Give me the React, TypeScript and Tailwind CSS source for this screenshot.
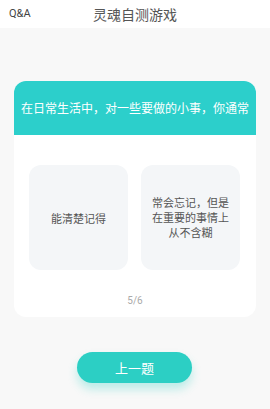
export default function App() {
  const font = { fontFamily: '"Noto Sans CJK SC", "Noto Sans", sans-serif' };
  return (
    <div className="w-[270px] h-[409px] bg-[#f8f8f8] flex flex-col overflow-hidden" style={font}>
      <div className="h-[28px] bg-white flex items-center relative shrink-0">
        <span className="absolute left-[9px] top-[7px] text-[11px] text-[#444] leading-[14px]" style={{ fontFamily: '"Roboto", "Noto Sans", sans-serif' }}>Q&amp;A</span>
        <span className="absolute left-[93px] top-[5px] text-[14px] text-[#555] leading-[18px]">灵魂自测游戏</span>
      </div>
      <div className="mx-[14px] mt-[53px] bg-white rounded-[12px] flex flex-col h-[236px] overflow-hidden">
        <div className="h-[54px] bg-[#2ccfcb] flex items-center justify-center">
          <span className="text-white text-[12px] leading-[14px] whitespace-nowrap">在日常生活中，对一些要做的小事，你通常</span>
        </div>
        <div className="flex gap-[13px] pl-[15px] mt-[30px]">
          <div className="w-[99px] h-[105px] rounded-[12px] bg-[#f4f6f8] flex items-center justify-center">
            <span className="text-[11px] text-[#555] leading-[14px]">能清楚记得</span>
          </div>
          <div className="w-[99px] h-[105px] rounded-[12px] bg-[#f4f6f8] flex items-center justify-center">
            <span className="text-[11px] text-[#555] leading-[15px] text-center whitespace-nowrap">
              常会忘记，但是
              <br />
              在重要的事情上
              <br />
              从不含糊
            </span>
          </div>
        </div>
        <div className="mt-[25px] text-center text-[10px] text-[#aaa] leading-[12px]" style={{ fontFamily: '"Roboto", sans-serif' }}>5/6</div>
      </div>
      <div className="flex justify-center mt-[35px] pr-[1px]">
        <div className="w-[115px] h-[31px] rounded-full bg-[#2ccfc4] flex items-center justify-center shadow-[0_6px_10px_rgba(44,207,196,0.3)]">
          <span className="text-white text-[13px] leading-[16px]">上一题</span>
        </div>
      </div>
    </div>
  );
}
